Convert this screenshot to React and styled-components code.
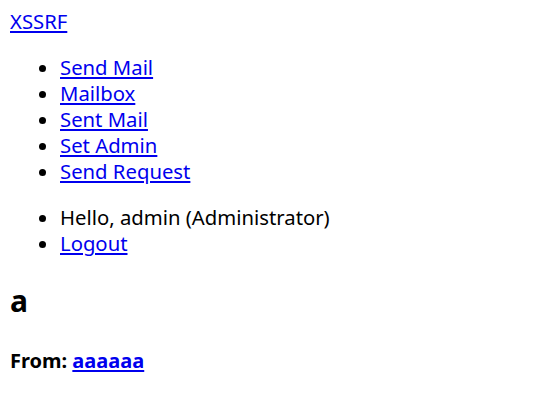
import React from "react";
import styled, { createGlobalStyle } from "styled-components";

const Global = createGlobalStyle`
  html, body { margin: 0; padding: 0; background: #fff; }
  body {
    margin: 8px 10px 10px;
    font-family: "Noto Sans", "Open Sans", sans-serif;
    font-size: 20.3px;
    line-height: 26px;
    color: #000;
  }
`;

const Link = styled.a`
  color: #0000ee;
  text-decoration: underline;
  text-underline-offset: 2px;
`;

const Brand = styled.div`
  height: 26px;
`;

const Menu = styled.ul`
  margin: 20px 0;
  padding: 0 0 0 50px;
  list-style: disc;
`;

const Item = styled.li`
  height: 26px;
`;

const Title = styled.h2`
  font-size: 30px;
  line-height: 40px;
  font-weight: bold;
  margin: 25px 0;
`;

const From = styled.h4`
  font-size: 20px;
  line-height: 26px;
  font-weight: bold;
  margin: 27px 0;
`;

const nav = ["Send Mail", "Mailbox", "Sent Mail", "Set Admin", "Send Request"];

export default function App() {
  return (
    <>
      <Global />
      <Brand>
        <Link href="#">XSSRF</Link>
      </Brand>
      <Menu>
        {nav.map((n) => (
          <Item key={n}>
            <Link href="#">{n}</Link>
          </Item>
        ))}
      </Menu>
      <Menu>
        <Item>Hello, admin (Administrator)</Item>
        <Item>
          <Link href="#">Logout</Link>
        </Item>
      </Menu>
      <Title>a</Title>
      <From>
        From: <Link href="#">aaaaaa</Link>
      </From>
    </>
  );
}
